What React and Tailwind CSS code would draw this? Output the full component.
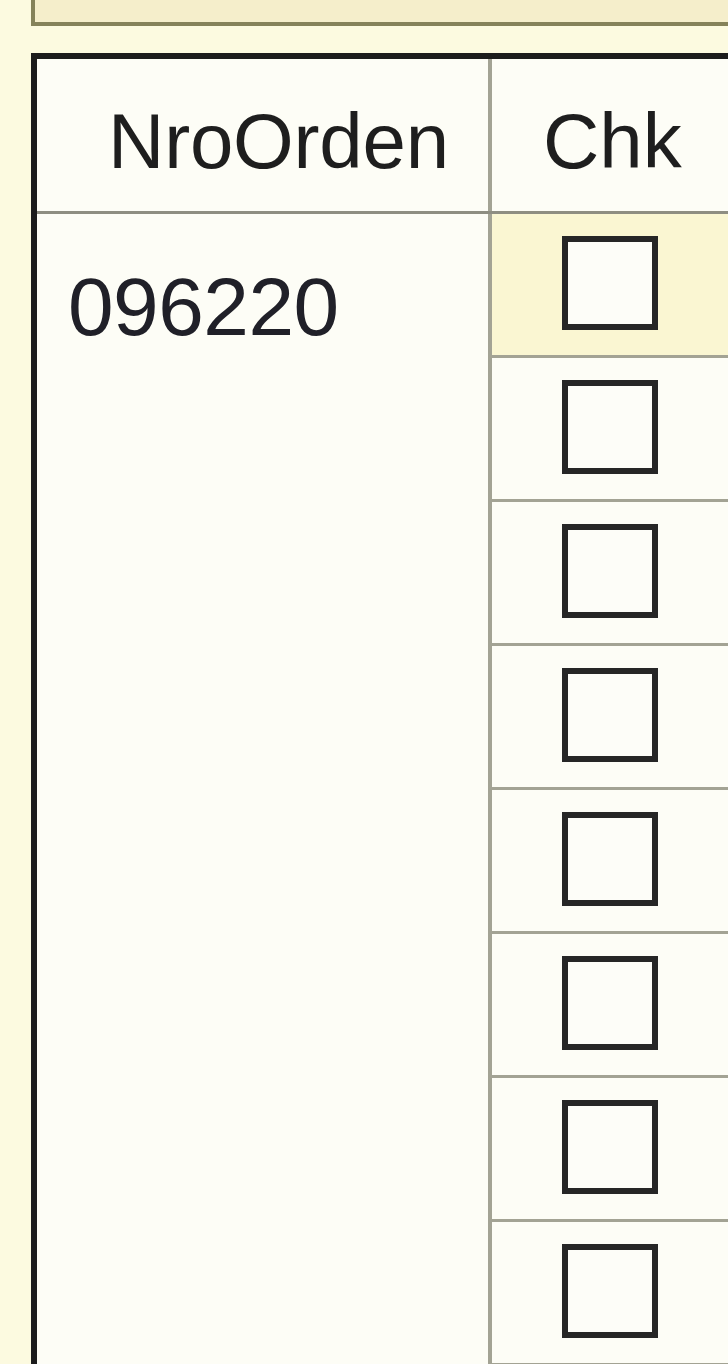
const font = { fontFamily: '"Liberation Sans", Arial, sans-serif' };

function CheckCell({ highlighted }) {
  return (
    <div
      className={`h-[144px] shrink-0 border-b-[3px] border-[#a3a394] pl-[70px] pt-[22px] ${highlighted ? 'bg-[#faf6d2]' : 'bg-[#fdfdf6]'}`}
    >
      <div className="h-[94px] w-[96px] border-[6px] border-[#262626] bg-[#fdfdf8]" />
    </div>
  );
}

export default function App() {
  const rows = [0, 1, 2, 3, 4, 5, 6, 7];

  return (
    <div className="h-[1364px] w-[728px] overflow-hidden bg-[#fcfae0]" style={font}>
      {/* panel above the grid */}
      <div className="ml-[31px] h-[26px] border-b-4 border-l-4 border-[#85825a] bg-[#f5eecb]" />

      {/* grid */}
      <div className="ml-[31px] mt-[27px] h-[1400px] border-l-[6px] border-t-[6px] border-[#1c1c1c] bg-[#fdfdf6]">
        <div className="flex h-[155px] border-b-[3px] border-[#8e8e82] text-[#1e1e1e]">
          <div className="flex w-[455px] shrink-0 items-center border-r-4 border-[#a3a394] pl-[71px] pt-[12px] text-[78px] leading-none tracking-[-0.2px]">
            NroOrden
          </div>
          <div className="flex flex-1 items-center pl-[51px] pt-[12px] text-[78px] leading-none">
            Chk
          </div>
        </div>

        <div className="flex">
          <div className="w-[455px] shrink-0 border-r-4 border-[#a3a394] pl-[31px] pt-[52px] text-[82px] leading-none tracking-[-0.5px] text-[#202028]">
            096220
          </div>
          <div className="flex flex-1 flex-col">
            {rows.map((r) => (
              <CheckCell key={r} highlighted={r === 0} />
            ))}
          </div>
        </div>
      </div>
    </div>
  );
}
